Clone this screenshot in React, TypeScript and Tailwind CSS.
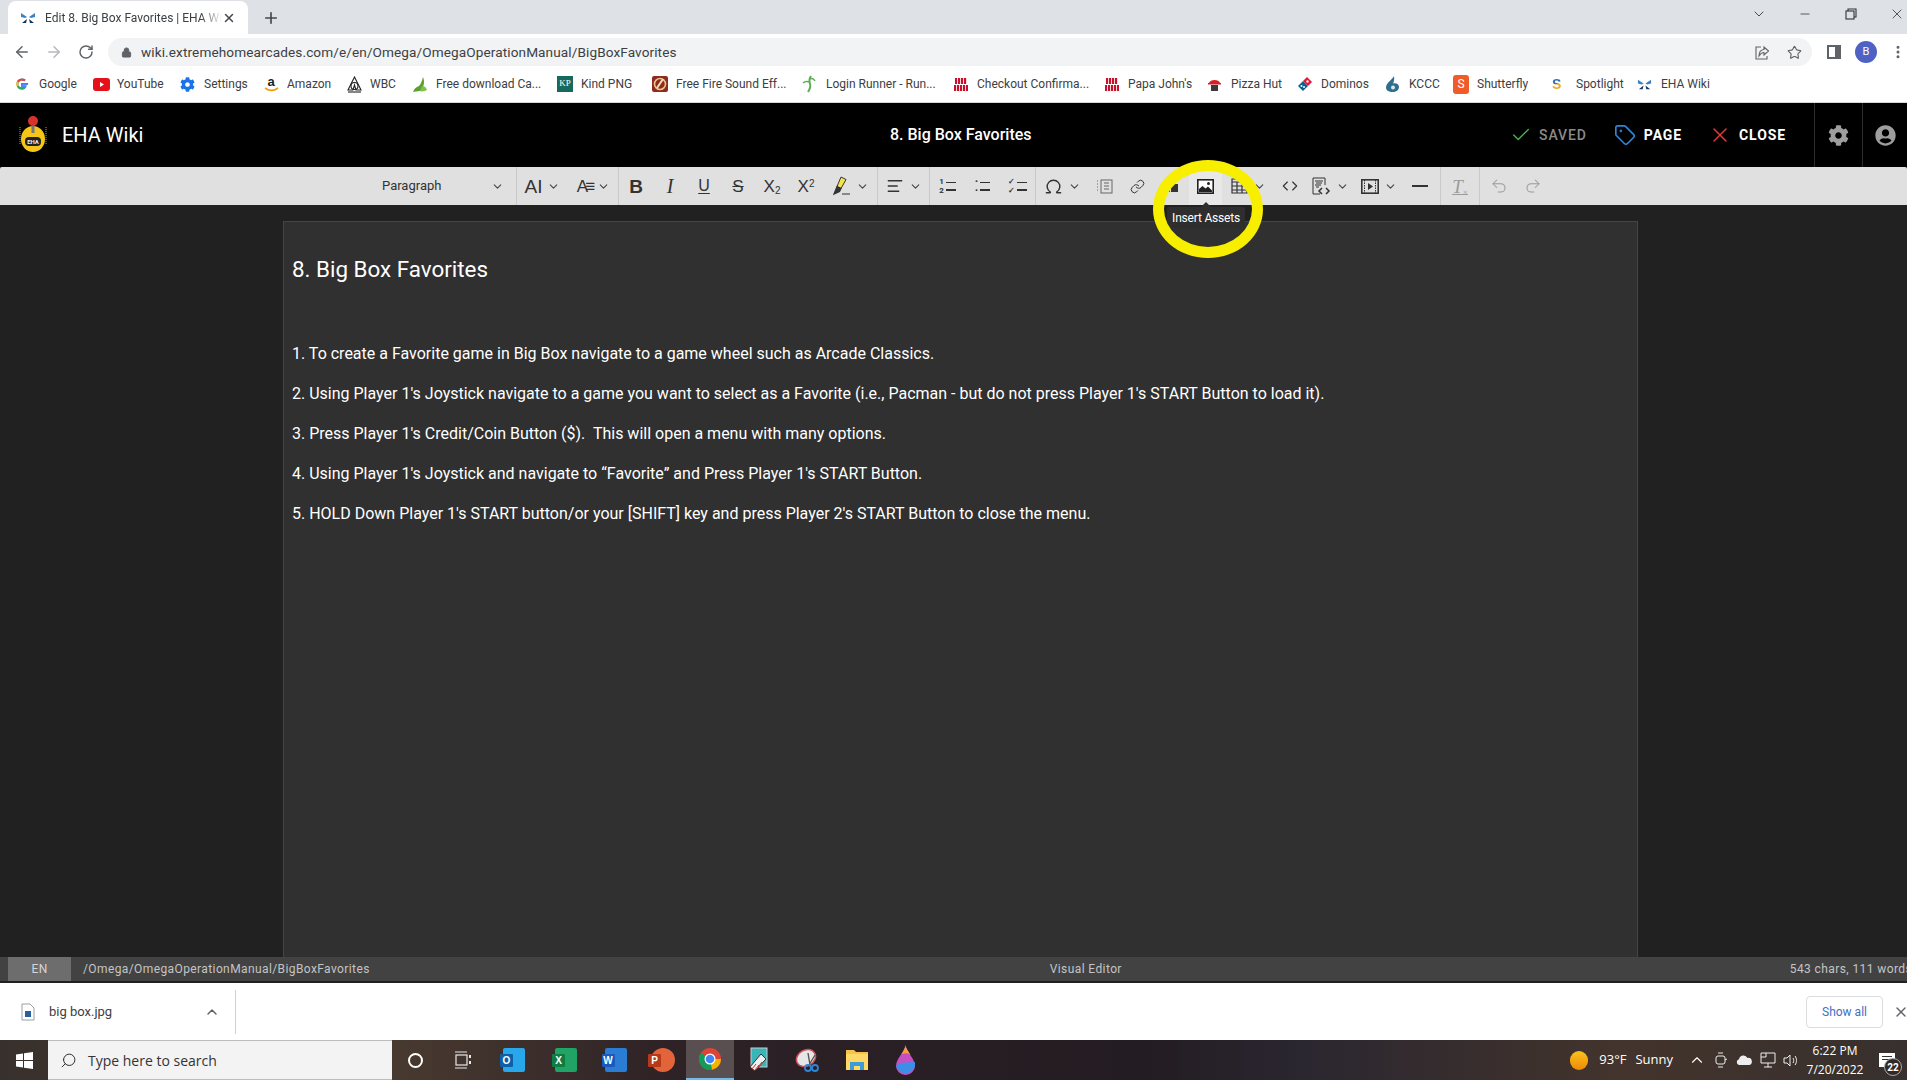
import {
  ArrowLeft, ArrowRight, RotateCw, Plus, X, ChevronDown, ChevronUp, Minus, Star, Lock, EllipsisVertical,
  Search, Check, Tag, Undo2, Redo2, Link, Omega, Code, AlignLeft,
} from "lucide-react";
import { FaCog, FaUserCircle } from "react-icons/fa";

function Butterfly({ size = 14 }: { size?: number }) {
  return (
    <svg width={size} height={size} viewBox="0 0 16 16">
      <path d="M1 3l6 4-2 1-4-1z" fill="#3b82c4" />
      <path d="M15 3L9 7l2 1 4-1z" fill="#3b82c4" />
      <path d="M2 13l5-4-1 4z" fill="#12335c" />
      <path d="M14 13L9 9l1 4z" fill="#12335c" />
    </svg>
  );
}

function BookmarkIcon({ name }: { name: string }) {
  switch (name) {
    case "google":
      return (
        <svg width="14" height="14" viewBox="0 0 16 16">
          <path d="M15 8h-7v2.6h4c-.4 1.5-2 2.6-4 2.6A5.2 5.2 0 0 1 8 2.8c1.3 0 2.5.5 3.4 1.3" fill="none" stroke="#4285f4" strokeWidth="2.4" />
          <path d="M3.2 5.5A5.2 5.2 0 0 1 8 2.8c1.3 0 2.5.5 3.4 1.3" fill="none" stroke="#ea4335" strokeWidth="2.4" />
          <path d="M3.2 10.5a5.2 5.2 0 0 1 0-5" fill="none" stroke="#fbbc05" strokeWidth="2.4" />
          <path d="M3.2 10.5A5.2 5.2 0 0 0 8 13.2c1 0 1.9-.3 2.7-.8" fill="none" stroke="#34a853" strokeWidth="2.4" />
        </svg>
      );
    case "youtube":
      return (
        <svg width="17" height="13" viewBox="0 0 17 13">
          <rect width="17" height="13" rx="3" fill="#e5101a" />
          <path d="M7 4l4 2.5L7 9z" fill="#fff" />
        </svg>
      );
    case "settings":
      return <FaCog size={15} color="#1a73e8" />;
    case "amazon":
      return (
        <div className="relative flex h-4 w-4 flex-col items-center leading-[11px]">
          <span className="font-['Liberation_Sans'] text-[13px] font-bold text-[#222]">a</span>
          <svg className="absolute bottom-0" width="15" height="5" viewBox="0 0 15 5">
            <path d="M1 1c4 3 9 3 13 0" fill="none" stroke="#f59e0b" strokeWidth="1.6" />
          </svg>
        </div>
      );
    case "wbc":
      return (
        <svg width="17" height="17" viewBox="0 0 17 17" fill="none" stroke="#222" strokeWidth="1.1">
          <path d="M8.5 1L2 14h5L8.5 9 10 14h5z" />
          <circle cx="8.5" cy="10" r="3.5" />
          <path d="M2 16h13" />
        </svg>
      );
    case "leaf":
      return (
        <svg width="16" height="17" viewBox="0 0 16 17">
          <path d="M11 1c2 5 1 10-3 14-3 0-6 1-7 1 1-3 3-5 6-6 2-2 3-5 4-9z" fill="#5aa02c" />
          <path d="M10 10c3 0 4 2 5 4-2 1-5 2-7 1z" fill="#7ec04a" />
        </svg>
      );
    case "kindpng":
      return <div className="flex h-4 w-4 items-center justify-center bg-[#17685f] font-['Liberation_Serif'] text-[9px] text-white">KP</div>;
    case "fire":
      return (
        <svg width="16" height="16" viewBox="0 0 16 16">
          <rect width="16" height="16" rx="2" fill="#8e2b20" />
          <circle cx="8" cy="8" r="5.5" fill="none" stroke="#e8c58a" strokeWidth="1.6" />
          <path d="M5 12l6-9" stroke="#f3dfb2" strokeWidth="2" />
        </svg>
      );
    case "runner":
      return (
        <svg width="15" height="18" viewBox="0 0 15 18" fill="none" stroke="#5fae56" strokeWidth="2">
          <path d="M9 1c-2 3-2 5-1 8s0 5-2 8" />
          <path d="M1 8c2-2 4-2 7-1M8 4c2-1 4 0 5 2" strokeWidth="1.4" />
        </svg>
      );
    case "papa":
      return (
        <div className="flex h-4 w-4 flex-col items-center justify-center gap-px">
          <div className="h-[6px] w-[12px] bg-[repeating-linear-gradient(90deg,#c8102e_0_2px,#f8d7d7_2px_3px)]" />
          <div className="h-[6px] w-[14px] bg-[repeating-linear-gradient(90deg,#c8102e_0_2px,#f8d7d7_2px_3px)]" />
        </div>
      );
    case "pizza":
      return (
        <svg width="15" height="15" viewBox="0 0 15 15">
          <path d="M2 6c1-4 10-4 11 0z" fill="#d81f26" />
          <rect x="1" y="6" width="13" height="1.5" fill="#d81f26" />
          <rect x="4" y="8" width="7" height="6" fill="#3b3b3b" />
        </svg>
      );
    case "dominos":
      return (
        <svg width="16" height="16" viewBox="0 0 16 16">
          <path d="M1 10l5-5 5 5-5 5z" fill="#0b648f" />
          <path d="M6 5l4-4 5 5-4 4z" fill="#e31837" />
          <circle cx="10.5" cy="5.5" r="1.2" fill="#fff" />
          <circle cx="4.5" cy="10" r="1" fill="#fff" />
          <circle cx="7" cy="11" r="1" fill="#fff" />
        </svg>
      );
    case "kccc":
      return (
        <svg width="15" height="18" viewBox="0 0 15 18">
          <path d="M9 1C7 5 1 8 1 12.5 1 15.5 4 17 7.5 17S14 15 14 12c0-3-3-4.5-6-3.5 1-2 1.500-4.500 1-7.500z" fill="#2e6f8e" />
          <circle cx="8" cy="12.500" r="2" fill="#d9e7ee" />
        </svg>
      );
    case "shutterfly":
      return <div className="flex h-[19px] w-4 items-center justify-center rounded-[3px] bg-[#f15a29] font-['Roboto'] text-[12px] text-white">S</div>;
    case "spotlight":
      return <span className="font-['Liberation_Sans'] text-[14px] font-bold leading-none bg-[linear-gradient(180deg,#2f6db5_0_50%,#e8a92c_50%)] bg-clip-text text-transparent">S</span>;
    default:
      return <Butterfly size={15} />;
  }
}

const bookmarks = [
  { icon: "google", label: "Google", width: "w-[78px]" },
  { icon: "youtube", label: "YouTube", width: "w-[87px]" },
  { icon: "settings", label: "Settings", width: "w-[83px]" },
  { icon: "amazon", label: "Amazon", width: "w-[83px]" },
  { icon: "wbc", label: "WBC", width: "w-[66px]" },
  { icon: "leaf", label: "Free download Ca...", width: "w-[145px]" },
  { icon: "kindpng", label: "Kind PNG", width: "w-[95px]" },
  { icon: "fire", label: "Free Fire Sound Eff...", width: "w-[150px]" },
  { icon: "runner", label: "Login Runner - Run...", width: "w-[151px]" },
  { icon: "papa", label: "Checkout Confirma...", width: "w-[151px]" },
  { icon: "papa", label: "Papa John's", width: "w-[103px]" },
  { icon: "pizza", label: "Pizza Hut", width: "w-[90px]" },
  { icon: "dominos", label: "Dominos", width: "w-[88px]" },
  { icon: "kccc", label: "KCCC", width: "w-[68px]" },
  { icon: "shutterfly", label: "Shutterfly", width: "w-[99px]" },
  { icon: "spotlight", label: "Spotlight", width: "w-[85px]" },
  { icon: "eha", label: "EHA Wiki", width: "w-[100px]" },
];

function BrowserChrome() {
  return (
    <div className="h-[103px] shrink-0 font-['Roboto'] text-[#3c4043]">
      <div className="flex h-[34px] items-end bg-[#dee1e6] pl-[8px]">
        <div className="flex h-[33px] w-[240px] items-center rounded-t-lg bg-white pl-[12px] pr-[12px]">
          <Butterfly size={16} />
          <span className="ml-[9px] w-[177px] overflow-hidden whitespace-nowrap text-[12px] [mask-image:linear-gradient(90deg,#000_88%,transparent)]">Edit 8. Big Box Favorites | EHA Wiki</span>
          <X size={14} strokeWidth={2.5} className="text-[#44474b]" />
        </div>
        <Plus size={18} strokeWidth={2.2} className="mb-[7px] ml-[14px] text-[#44474b]" />
        <div className="mb-[12px] ml-auto flex items-center text-[#303235]">
          <ChevronDown size={16} strokeWidth={1.3} className="mr-[31px]" />
          <Minus size={14} strokeWidth={1.3} className="mr-[33px]" />
          <svg width="12" height="12" viewBox="0 0 12 12" fill="none" stroke="#303235" strokeWidth="1.1" className="mr-[32px]">
            <rect x="1" y="3" width="8" height="8" />
            <path d="M3 3V1h8v8H9" />
          </svg>
          <X size={16} strokeWidth={1.2} className="mr-[2px]" />
        </div>
      </div>
      <div className="flex h-[32px] items-end bg-white pl-[13px]">
        <div className="flex h-[28px] items-center">
          <ArrowLeft size={18} strokeWidth={2} className="text-[#5f6368]" />
          <ArrowRight size={18} strokeWidth={2} className="ml-[14px] text-[#b5b8bc]" />
          <RotateCw size={16} strokeWidth={2.2} className="ml-[15px] text-[#5f6368]" />
          <div className="ml-[14px] flex h-[28px] w-[1704px] items-center rounded-l-full rounded-r-full bg-[#f1f3f4] pl-[13px]">
            <Lock size={11} fill="#5f6368" className="text-[#5f6368]" />
            <span className="ml-[9px] text-[13.6px] tracking-[.1px] text-[#3d3f43]">wiki.extremehomearcades.com/e/en/Omega/OmegaOperationManual/BigBoxFavorites</span>
            <div className="ml-auto flex items-center gap-[17px] pr-[10px]">
              <svg width="15" height="15" viewBox="0 0 15 15" fill="none" stroke="#5f6368" strokeWidth="1.1">
                <path d="M6 2H1v12h11v-3" />
                <path d="M13.500 6L9 2v2.500C5 5 4 8 4 11c1.500-2.500 3-3.500 5-3.500V10z" />
              </svg>
              <Star size={15} strokeWidth={1.8} className="text-[#5f6368]" />
            </div>
          </div>
          <div className="ml-[15px] h-[14px] w-[14px] border-2 border-r-[6px] border-[#5f6368] bg-white" />
          <div className="ml-[14px] flex h-[22px] w-[22px] items-center justify-center rounded-full bg-[#4f62c4] text-[11px] text-white">B</div>
          <EllipsisVertical size={16} strokeWidth={2.5} className="ml-[13px] text-[#5f6368]" />
        </div>
      </div>
      <div className="flex h-[37px] items-center border-b border-[#d5d7da] bg-white pl-[15px] text-[12px]">
        {bookmarks.map((b) => (
          <div key={b.label} className={`flex shrink-0 items-center ${b.width}`}>
            <div className="flex w-[24px] shrink-0 items-center">
              <BookmarkIcon name={b.icon} />
            </div>
            <span className="whitespace-nowrap">{b.label}</span>
          </div>
        ))}
      </div>
    </div>
  );
}

function AppHeader() {
  return (
    <div className="flex h-[64px] shrink-0 items-center bg-black font-['Roboto'] text-white">
      <svg width="28" height="38" viewBox="0 0 28 38" className="ml-[19px] mt-[-2px]">
        <path d="M1 12v18M27 12v18" stroke="#33506f" strokeWidth="2" strokeDasharray="1 1" />
        <ellipse cx="14" cy="24" rx="12" ry="13" fill="#f5c518" />
        <rect x="12.500" y="8" width="3" height="10" fill="#777" />
        <circle cx="14" cy="6" r="5" fill="#d8322c" />
        <rect x="6" y="22" width="16" height="9" rx="4" fill="#222" />
        <text x="14" y="29" textAnchor="middle" fontSize="6" fontWeight="700" fill="#eee" fontFamily="Roboto">EHA</text>
      </svg>
      <span className="ml-[15px] text-[20px]">EHA Wiki</span>
      <div className="flex flex-1 justify-center pl-[268px] text-[16px] font-medium">8. Big Box Favorites</div>
      <div className="flex h-full items-center text-[14px] font-medium tracking-[.9px]">
        <Check size={22} strokeWidth={1.5} className="text-[#4caf50]" />
        <span className="ml-[7px] text-[#8a8a8a]">SAVED</span>
        <Tag size={22} strokeWidth={1.8} className="ml-[27px] text-[#2e86d6]" />
        <span className="ml-[8px] font-bold">PAGE</span>
        <X size={24} strokeWidth={1.5} className="ml-[26px] text-[#e53935]" />
        <span className="ml-[7px] font-bold">CLOSE</span>
        <div className="ml-[28px] flex h-full w-[49px] items-center justify-center border-x border-[#2b2b2b]">
          <FaCog size={21} color="#9e9e9e" />
        </div>
        <div className="flex h-full w-[44px] items-center justify-center">
          <FaUserCircle size={21} color="#9e9e9e" />
        </div>
      </div>
    </div>
  );
}

function Chev() {
  return <ChevronDown size={13} strokeWidth={2} className="text-[#444]" />;
}

function ToolBtn({ width, children, arrow }: { width: string; children: React.ReactNode; arrow?: boolean }) {
  return (
    <div className={`flex h-full shrink-0 items-center justify-center gap-[5px] ${width}`}>
      {children}
      {arrow && <Chev />}
    </div>
  );
}

function Glyph({ className, children }: { className: string; children: React.ReactNode }) {
  return <span className={`leading-none text-[#333] ${className}`}>{children}</span>;
}

function ImageIcon() {
  return (
    <svg width="17" height="15" viewBox="0 0 17 15">
      <rect x=".8" y=".8" width="15.400" height="13.400" fill="#fff" stroke="#222" strokeWidth="1.6" />
      <path d="M2 13V10l3.500-3 3 2.500L11 7.500l4 4V13z" fill="#222" />
      <circle cx="11.500" cy="4.500" r="1.500" fill="#222" />
    </svg>
  );
}

function EditorToolbar() {
  return (
    <div className="flex h-[38px] shrink-0 items-center rounded-t-[2px] bg-[#e0e0e0] pl-[369px] font-['Roboto'] text-[#333]">
      <div className="flex h-full w-[148px] items-center border-r border-[#c9c9c9] pl-[13px] pr-[12px] text-[13px]">
        <span>Paragraph</span>
        <ChevronDown size={13} strokeWidth={2} className="ml-auto text-[#444]" />
      </div>
      <div className="flex h-full w-[102px] border-r border-[#c9c9c9]">
        <ToolBtn width="w-[51px]" arrow>
          <Glyph className="font-['Liberation_Sans'] text-[19px]">AI</Glyph>
        </ToolBtn>
        <ToolBtn width="w-[51px]" arrow>
          <Glyph className="font-['Liberation_Sans'] text-[17px] tracking-[-3px]">A≡</Glyph>
        </ToolBtn>
      </div>
      <div className="flex h-full w-[259px] border-r border-[#c9c9c9]">
        <ToolBtn width="w-[34px]"><Glyph className="font-['Liberation_Sans'] text-[19px] font-bold">B</Glyph></ToolBtn>
        <ToolBtn width="w-[34px]"><Glyph className="font-['Liberation_Serif'] text-[20px] italic">I</Glyph></ToolBtn>
        <ToolBtn width="w-[34px]"><Glyph className="font-['Liberation_Sans'] text-[16px] underline underline-offset-2">U</Glyph></ToolBtn>
        <ToolBtn width="w-[34px]"><Glyph className="font-['Liberation_Sans'] text-[17px] line-through">S</Glyph></ToolBtn>
        <ToolBtn width="w-[34px]"><Glyph className="font-['Liberation_Sans'] text-[17px]">X<sub className="text-[10px]">2</sub></Glyph></ToolBtn>
        <ToolBtn width="w-[34px]"><Glyph className="font-['Liberation_Sans'] text-[17px]">X<sup className="text-[10px]">2</sup></Glyph></ToolBtn>
        <ToolBtn width="w-[55px]" arrow>
          <svg width="19" height="20" viewBox="0 0 19 20">
            <path d="M9 1l5 2.500-5 9-4-2z" fill="#f4e34c" stroke="#333" strokeWidth="1" />
            <path d="M2 18l3-7.500 4 2-1.500 3zM10 18h8" fill="#333" stroke="#333" strokeWidth="1.200" />
          </svg>
        </ToolBtn>
      </div>
      <div className="flex h-full w-[52px] border-r border-[#c9c9c9]">
        <ToolBtn width="w-[52px]" arrow><AlignLeft size={18} strokeWidth={1.7} /></ToolBtn>
      </div>
      <div className="flex h-full w-[106px] border-r border-[#c9c9c9]">
        {["1\n2", "•\n•", "✓\n✓"].map((mark) => (
          <ToolBtn key={mark} width="w-[35px]">
            <div className="flex items-center gap-[2px]">
              <span className="whitespace-pre text-[8px] font-bold leading-[9px]">{mark}</span>
              <div className="flex flex-col gap-[6px]">
                <div className="h-[1.500px] w-[10px] bg-[#333]" />
                <div className="h-[1.500px] w-[10px] bg-[#333]" />
              </div>
            </div>
          </ToolBtn>
        ))}
      </div>
      <div className="flex h-full w-[405px] border-r border-[#c9c9c9]">
        <ToolBtn width="w-[52px]" arrow><Omega size={19} strokeWidth={1.8} /></ToolBtn>
        <ToolBtn width="w-[33px]">
          <svg width="17" height="17" viewBox="0 0 17 17" fill="none" stroke="#666" strokeWidth="1">
            <rect x="5" y="2" width="11" height="13" />
            <path d="M8 5h5M8 8h5M8 11h5" />
            <path d="M1 3h2M1 6h2M1 9h2M1 12h2" strokeDasharray="1 1" />
          </svg>
        </ToolBtn>
        <ToolBtn width="w-[33px]"><Link size={15} strokeWidth={1.6} /></ToolBtn>
        <ToolBtn width="w-[35px]">
          <svg width="13" height="8" viewBox="0 0 13 8" className="mt-[4px]"><path d="M0 3h5v5H0z" fill="#333" /><path d="M6 0h7v8H6z" fill="#333" /></svg>
        </ToolBtn>
        <div className="relative flex h-full w-[33px] shrink-0 items-center justify-center bg-[#e8e8e8]">
          <ImageIcon />
          <div className="absolute left-[-22px] top-[35px] z-10 flex h-[22px] w-[78px] flex-col items-center">
            <div className="h-0 w-0 border-x-[5px] border-b-[5px] border-x-transparent border-b-[#2e2e2e]" />
            <div className="flex h-[21px] w-full shrink-0 items-center justify-center rounded-[2px] bg-[#2e2e2e] text-[12px] tracking-[-.2px] text-white">Insert Assets</div>
          </div>
        </div>
        <ToolBtn width="w-[52px]" arrow>
          <svg width="17" height="16" viewBox="0 0 17 16" fill="none" stroke="#333" strokeWidth="1.200">
            <path d="M1 1h8v3h7v11H1zM1 4h15M1 8h15M1 12h15M6 4v11M11 4v11" />
          </svg>
        </ToolBtn>
        <ToolBtn width="w-[31px]"><Code size={16} strokeWidth={1.7} /></ToolBtn>
        <ToolBtn width="w-[50px]" arrow>
          <svg width="20" height="20" viewBox="0 0 20 20" fill="none" stroke="#333" strokeWidth="1">
            <path d="M9 18H2V2h12v7" />
            <path d="M4 5h8M5 7h6M4 9h6M5 11h3" />
            <path d="M11 12l-3 3 3 3M15 12l3 3-3 3" strokeWidth="1.500" />
          </svg>
        </ToolBtn>
        <ToolBtn width="w-[48px]" arrow>
          <svg width="18" height="15" viewBox="0 0 18 15">
            <rect x=".8" y=".8" width="16.400" height="13.400" fill="none" stroke="#333" strokeWidth="1.600" />
            <path d="M3.500 1v13M14.500 1v13" stroke="#333" strokeWidth="1" strokeDasharray="1.500 1" />
            <path d="M7 4l5 3.500-5 3.500z" fill="#333" />
          </svg>
        </ToolBtn>
        <ToolBtn width="w-[34px]"><div className="h-[2px] w-[16px] bg-[#333]" /></ToolBtn>
      </div>
      <div className="flex h-full w-[39px] items-center justify-center border-r border-[#c9c9c9]">
        <Glyph className="font-['Liberation_Serif'] text-[19px] italic !text-[#9a9a9a] underline">T<sub className="text-[9px] not-italic">×</sub></Glyph>
      </div>
      <div className="flex items-center gap-[16px] pl-[10px] text-[#9a9a9a]">
        <Undo2 size={18} strokeWidth={1.400} />
        <Redo2 size={18} strokeWidth={1.400} />
      </div>
    </div>
  );
}

const steps = [
  "1. To create a Favorite game in Big Box navigate to a game wheel such as Arcade Classics.",
  "2. Using Player 1's Joystick navigate to a game you want to select as a Favorite (i.e., Pacman - but do not press Player 1's START Button to load it).",
  "3. Press Player 1's Credit/Coin Button ($).  This will open a menu with many options.",
  "4. Using Player 1's Joystick and navigate to “Favorite” and Press Player 1's START Button.",
  "5. HOLD Down Player 1's START button/or your [SHIFT] key and press Player 2's START Button to close the menu.",
];

function StatusBar() {
  return (
    <div className="h-[26px] shrink-0 overflow-hidden border-b-2 border-[#212121] bg-[#424242] font-['Roboto'] text-[12px] tracking-[.4px] text-[#c4c4c4]">
      <div className="flex h-full w-[1912px] items-center justify-between">
        <div className="flex h-full items-center">
          <div className="ml-[8px] flex h-full w-[63px] items-center justify-center bg-[#6d6d6d] text-[#d5d5d5]">EN</div>
          <span className="ml-[12px]">/Omega/OmegaOperationManual/BigBoxFavorites</span>
        </div>
        <span className="ml-[12px]">Visual Editor</span>
        <span>543 chars, 111 words</span>
      </div>
    </div>
  );
}

function DownloadShelf() {
  return (
    <div className="flex h-[57px] shrink-0 items-center bg-white font-['Roboto'] text-[12px] text-[#3c4043]">
      <svg width="14" height="18" viewBox="0 0 14 18" className="ml-[21px]">
        <path d="M1 1h8l4 4v12H1z" fill="#fff" stroke="#9aa0a6" />
        <rect x="4" y="8" width="6" height="6" fill="#2a5f9e" />
      </svg>
      <span className="ml-[14px] text-[13px]">big box.jpg</span>
      <ChevronUp size={16} strokeWidth={2.2} className="ml-[92px] text-[#5f6368]" />
      <div className="ml-[15px] h-[44px] w-px bg-[#d0d2d5]" />
      <div className="ml-auto flex h-[32px] w-[77px] items-center justify-center rounded-[4px] border border-[#dadce0] text-[#3f6fc6]">Show all</div>
      <X size={16} strokeWidth={2} className="ml-[10px] mr-[-2px] text-[#5f6368]" />
    </div>
  );
}

function OfficeIcon({ letter, from, to, width }: { letter: string; from: string; to: string; width: string }) {
  return (
    <div className={`flex h-[40px] shrink-0 items-center justify-center ${width}`}>
      <div className={`relative h-[24px] w-[22px] rounded-[2px] ${to}`}>
        <div className={`absolute left-[-3px] top-[6px] flex h-[13px] w-[13px] items-center justify-center rounded-[1px] font-['Liberation_Sans'] text-[10px] font-bold text-white ${from}`}>{letter}</div>
      </div>
    </div>
  );
}

function Taskbar() {
  return (
    <div className="flex h-[40px] shrink-0 items-center bg-[linear-gradient(90deg,#38302c_0%,#4a3b30_20%,#2e2226_35%,#231c22_60%,#2a2630_68%,#43342c_85%,#37302e_100%)] font-['Roboto'] text-white">
      <div className="flex h-full w-[48px] shrink-0 items-center justify-center">
        <svg width="17" height="17" viewBox="0 0 17 17" fill="#fff">
          <path d="M0 2.500l7-1v6.500H0zM8 1.300l9-1.300v8H8zM0 9h7v6.500l-7-1zM8 9h9v8l-9-1.300z" />
        </svg>
      </div>
      <div className="flex h-full w-[344px] shrink-0 items-center border-y border-[#bdbdbd] bg-[#f3f3f3] pl-[12px] font-['Open_Sans'] text-[14px] text-[#333]">
        <Search size={17} strokeWidth={1.3} className="scale-x-[-1] text-[#222]" />
        <span className="ml-[11px]">Type here to search</span>
      </div>
      <div className="flex w-[47px] shrink-0 justify-center">
        <div className="ml-[-1px] h-[15px] w-[15px] rounded-full border-2 border-white" />
      </div>
      <div className="flex w-[48px] shrink-0 justify-center">
        <svg width="16" height="18" viewBox="0 0 16 18" fill="none" stroke="#e8e8e8" strokeWidth="1.200">
          <path d="M0 1h12M0 17h12" />
          <rect x="1" y="4" width="11" height="10" />
          <path d="M15 4v3M15 10v3" strokeWidth="2" />
        </svg>
      </div>
      <OfficeIcon letter="O" from="bg-[#0f5fa8]" to="bg-[#28a8ea]" width="w-[54px]" />
      <OfficeIcon letter="X" from="bg-[#107c41]" to="bg-[#21a366]" width="w-[50px]" />
      <OfficeIcon letter="W" from="bg-[#185abd]" to="bg-[#2b7cd3]" width="w-[49px]" />
      <div className="flex h-full w-[46px] shrink-0 items-center justify-center">
        <div className="relative h-[24px] w-[24px] rounded-full bg-[#e2643a]">
          <div className="absolute left-[-3px] top-[6px] flex h-[13px] w-[13px] items-center justify-center rounded-[1px] bg-[#b7391a] font-['Liberation_Sans'] text-[10px] font-bold text-white">P</div>
        </div>
      </div>
      <div className="flex h-full w-[48px] shrink-0 flex-col items-center justify-center border-b-[2px] border-[#76b9ed] bg-[#5a4f50]">
        <svg width="24" height="24" viewBox="0 0 24 24">
          <circle cx="12" cy="12" r="11" fill="#db4437" />
          <path d="M12 12L2.500 17.500A11 11 0 0 0 12 23c1 0 2-.1 3-.4z" fill="#0f9d58" />
          <path d="M2.500 17.500A11 11 0 0 1 3 6l9 6z" fill="#0f9d58" />
          <path d="M12 12h11a11 11 0 0 1-9 10.800z" fill="#f4b400" />
          <circle cx="12" cy="12" r="5.500" fill="#fff" />
          <circle cx="12" cy="12" r="4.300" fill="#4285f4" />
        </svg>
      </div>
      <div className="flex w-[49px] shrink-0 justify-center">
        <svg width="20" height="26" viewBox="0 0 20 26">
          <rect x="2" y="1" width="16" height="19" fill="#38b5b8" stroke="#ccc" />
          <path d="M1 20L12 7l5 5L6 24z" fill="#eee" stroke="#333" />
          <path d="M3 22l4-5M6 23l4-5M9 20l4-5" stroke="#c33" />
        </svg>
      </div>
      <div className="flex w-[49px] shrink-0 justify-center">
        <svg width="26" height="26" viewBox="0 0 26 26">
          <ellipse cx="11" cy="11" rx="10" ry="8" fill="#e6e6e6" stroke="#c9515c" strokeWidth="1.500" transform="rotate(-30 11 11)" />
          <path d="M13 6l2 12M20 8l-6 10" stroke="#555" strokeWidth="1.400" />
          <circle cx="13" cy="21" r="3" fill="none" stroke="#2e86d6" strokeWidth="1.800" />
          <circle cx="20" cy="21" r="3" fill="none" stroke="#2e86d6" strokeWidth="1.800" />
        </svg>
      </div>
      <div className="flex w-[49px] shrink-0 justify-center">
        <svg width="22" height="20" viewBox="0 0 22 20">
          <path d="M0 0h8l2 2h12v18H0z" fill="#f5c54a" />
          <rect x="0" y="4" width="22" height="16" fill="#ffd868" />
          <path d="M4 20v-8h14v8h-4v-4H8v4z" fill="#3d9bd6" />
        </svg>
      </div>
      <div className="flex w-[49px] shrink-0 justify-center">
        <svg width="19" height="30" viewBox="0 0 19 30">
          <path d="M9.500 0C9 6 0 14 0 21a9.500 9 0 0 0 19 0C19 14 10 6 9.500 0z" fill="#c650c0" />
          <path d="M0 21c4-5 11-3 19-4a9.500 9 0 0 1-19 4z" fill="#3d8ee6" />
          <path d="M9.500 0c0 3-2 6-4 9 4-1 7-1 9 1-2-4-5-7-5-10z" fill="#f2a33a" />
        </svg>
      </div>
      <div className="ml-auto flex h-full items-center text-[14px]">
        <div className="h-[19px] w-[18px] rounded-full bg-[linear-gradient(180deg,#f9c31c,#ef8a08)]" />
        <span className="ml-[11px] font-['Open_Sans'] text-[13px]">93°F</span>
        <span className="ml-[9px] font-['Open_Sans'] text-[13px]">Sunny</span>
        <ChevronUp size={18} strokeWidth={1.500} className="ml-[15px]" />
        <svg width="12" height="18" viewBox="0 0 12 18" fill="none" stroke="#eee" strokeWidth="1" className="ml-[9px]">
          <rect x="1" y="5" width="9" height="8" rx="2" />
          <path d="M3 2h5M3 16h5M10 9l2-1" />
        </svg>
        <svg width="16" height="10" viewBox="0 0 16 10" fill="#eee" className="ml-[9px]">
          <path d="M3 10a3 3 0 0 1 0-5.800A4.500 4.500 0 0 1 11.500 3 3.500 3.500 0 0 1 13 10z" />
        </svg>
        <svg width="16" height="16" viewBox="0 0 16 16" fill="none" stroke="#eee" strokeWidth="1" className="ml-[8px]">
          <path d="M1 1h14v10H1zM8 11v4M4 15h8M1 5h5V1" />
        </svg>
        <svg width="15" height="15" viewBox="0 0 15 15" fill="none" stroke="#eee" strokeWidth="1" className="ml-[7px]">
          <path d="M1 5h3l3-3v11l-3-3H1zM10 5c1 1.500 1 3.500 0 5M12 3c2 2.500 2 6.500 0 9" />
        </svg>
        <div className="ml-[7px] flex w-[60px] flex-col items-center font-['Open_Sans'] text-[12px] leading-[19px]">
          <span>6:22 PM</span>
          <span>7/20/2022</span>
        </div>
        <div className="relative ml-[14px] mr-[12px] h-[14px] w-[16px] bg-white">
          <div className="mx-[3px] mt-[3px] h-px bg-[#333]" />
          <div className="mx-[3px] mt-[2px] h-px bg-[#333]" />
          <div className="absolute left-[5px] top-[5px] flex h-[18px] w-[18px] items-center justify-center rounded-full border border-[#aaa] bg-[#2f2a2a] text-[10px] font-bold">22</div>
        </div>
      </div>
    </div>
  );
}

export default function App() {
  return (
    <div className="relative flex h-screen w-full flex-col overflow-hidden bg-[#212121]">
      <BrowserChrome />
      <AppHeader />
      <EditorToolbar />
      <div className="flex min-h-0 flex-1 bg-[#212121] pl-[283px] pt-[16px]">
        <div className="h-full w-[1355px] border-x border-t border-[#444] bg-[#303030] pl-[8px] font-['Roboto'] text-white">
          <h1 className="mt-[33px] text-[22.4px] leading-[28px]">8. Big Box Favorites</h1>
          <div className="mt-[59px] flex flex-col gap-[16px] text-[16px] leading-[24px]">
            {steps.map((s) => (
              <p key={s} className="whitespace-pre">{s}</p>
            ))}
          </div>
        </div>
      </div>
      <StatusBar />
      <DownloadShelf />
      <Taskbar />
      {/* yellow annotation ring */}
      <div className="absolute left-[1153px] top-[160px] z-20 h-[98px] w-[110px] rounded-[50%] border-[11px] border-[#f7ee00]" />
    </div>
  );
}
